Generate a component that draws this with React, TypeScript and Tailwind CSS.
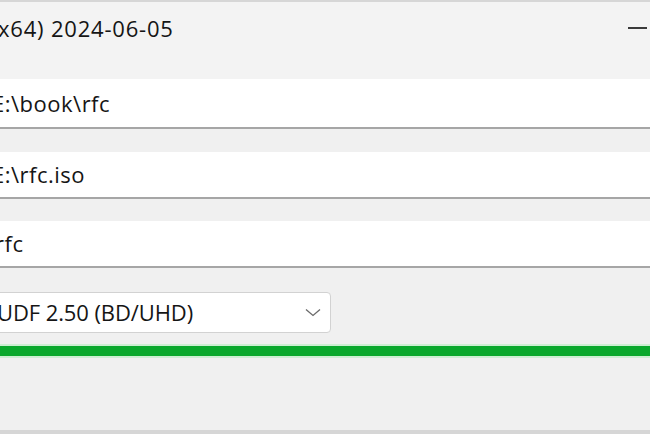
import React from "react";

const font = { fontFamily: '"Open Sans", "Noto Sans", sans-serif' };

const Field: React.FC<{ value: string; shift: string; className?: string }> = ({ value, shift, className }) => (
  <div className={`bg-white border-b-2 border-[#a6a6a6] flex items-center overflow-hidden ${className ?? ""}`}>
    <span className={`${shift} text-[22px] tracking-[0.5px] text-[#151515] whitespace-nowrap`}>{value}</span>
  </div>
);

export default function App() {
  return (
    <div
      className="w-[650px] h-[434px] bg-[#f0f0f0] flex flex-col overflow-hidden border-t-2 border-b-4 border-[#d6d6d6]"
      style={font}
    >
      {/* window title */}
      <div className="h-[77px] bg-[#f3f3f3] flex items-start justify-between pt-[10px] shrink-0">
        <span className="-ml-[2px] text-[22px] tracking-[0.8px] text-[#151515] whitespace-nowrap">x64) 2024-06-05</span>
        <div className="w-[19px] h-[2px] bg-[#3a3a3a] mt-[15px] mr-[3px]" />
      </div>

      <Field value="E:\book\rfc" shift="-ml-[8px]" className="h-[50px] shrink-0" />
      <Field value="E:\rfc.iso" shift="-ml-[8px]" className="h-[47px] mt-[23px] shrink-0" />
      <Field value="rfc" shift="-ml-[5px]" className="h-[47px] mt-[22px] shrink-0" />

      {/* file system select */}
      <div className="mt-[24px] h-[41px] w-[341px] -ml-[10px] pl-[10px] pr-[8px] bg-white border border-[#d2d2d2] rounded-[4px] flex items-center justify-between shrink-0">
        <span className="-ml-[4px] text-[22px] tracking-[-0.1px] text-[#151515] whitespace-nowrap">UDF 2.50 (BD/UHD)</span>
        <svg width="16" height="9" viewBox="0 0 16 9" className="mr-[1px]">
          <path d="M1 1.5 L8 7.5 L15 1.5" fill="none" stroke="#6a6a6a" strokeWidth="1.3" />
        </svg>
      </div>

      {/* progress */}
      <div className="mt-[11px] h-[14px] border-y-2 border-[#cdeed2] bg-[#0aa82c] shrink-0" />
    </div>
  );
}
